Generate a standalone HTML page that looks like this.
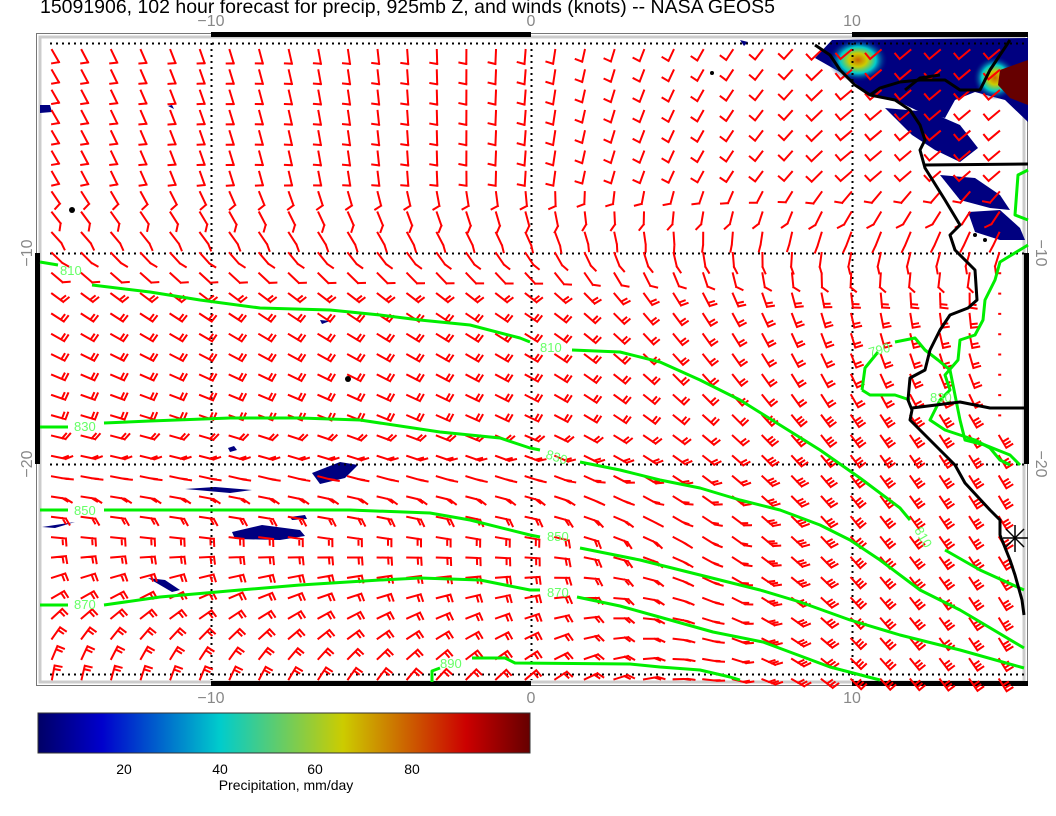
<!DOCTYPE html>
<html><head><meta charset="utf-8"><style>
html,body{margin:0;padding:0;background:#fff;width:1056px;height:816px;overflow:hidden}
svg{display:block}
text{font-family:"Liberation Sans",sans-serif}
</style></head><body>
<svg id="s" width="1056" height="816" viewBox="0 0 1056 816" xmlns="http://www.w3.org/2000/svg">
<defs>
<linearGradient id="cb" x1="0" x2="1" y1="0" y2="0">
<stop offset="0" stop-color="#000066"/>
<stop offset="0.13" stop-color="#0000cc"/>
<stop offset="0.37" stop-color="#00cccc"/>
<stop offset="0.62" stop-color="#cccc00"/>
<stop offset="0.87" stop-color="#cc0000"/>
<stop offset="1" stop-color="#660000"/>
</linearGradient>
<radialGradient id="hot" cx="0.5" cy="0.5" r="0.5">
<stop offset="0" stop-color="#cc6600"/>
<stop offset="0.3" stop-color="#cccc00"/>
<stop offset="0.6" stop-color="#00cccc"/>
<stop offset="1" stop-color="#000080" stop-opacity="0"/>
</radialGradient>
</defs>
<text x="40" y="13" font-size="19.5" fill="#000" textLength="735" lengthAdjust="spacingAndGlyphs">15091906, 102 hour forecast for precip, 925mb Z, and winds (knots) -- NASA GEOS5</text>
<!-- frame -->
<rect x="36.5" y="33.5" width="991" height="652" fill="none" stroke="#777" stroke-width="1"/>
<rect x="40" y="37" width="984" height="645" fill="none" stroke="#ccc" stroke-width="3"/>
<rect x="211" y="32" width="320" height="5" fill="#000"/>
<rect x="852" y="32" width="176" height="5" fill="#000"/>
<rect x="211" y="681" width="320" height="5" fill="#000"/>
<rect x="852" y="681" width="176" height="5" fill="#000"/>
<rect x="35" y="253" width="5" height="211" fill="#000"/>
<rect x="1024" y="253" width="5" height="211" fill="#000"/>
<!-- precip -->
<g fill="#000080">
<path d="M815,58 L832,40 L1028,38 L1028,122 L1005,100 L975,92 L955,100 L945,118 L920,112 L895,100 L870,95 L845,75 Z"/>
<path d="M885,108 L930,112 L960,125 L978,148 L960,162 L935,150 L912,135 Z"/>
<path d="M940,175 L975,178 L1000,195 L1010,210 L990,208 L960,200 Z"/>
<path d="M968,212 L1000,210 L1020,228 L1025,240 L1000,240 L975,232 Z"/>
<path d="M740,40 L748,42 L744,46 Z"/>
<path d="M312,473 L340,462 L358,465 L345,478 L320,484 Z"/>
<path d="M185,489 L215,487 L252,490 L230,493 Z"/>
<path d="M232,532 L262,525 L300,530 L305,536 L280,540 L235,539 Z"/>
<path d="M42,527 L75,522 L55,528 Z"/>
<path d="M148,578 L165,580 L180,590 L172,592 Z"/>
<path d="M228,448 L234,446 L237,450 L230,452 Z"/>
<path d="M290,517 L305,515 L307,519 L292,520 Z"/>
<path d="M40,105 L50,105 L52,112 L40,113 Z"/>
<path d="M168,106 L172,105 L174,109 Z"/>
<path d="M320,320 L330,321 L322,324 Z"/>
</g>
<ellipse cx="858" cy="60" rx="30" ry="22" fill="url(#hot)"/>
<ellipse cx="995" cy="78" rx="22" ry="22" fill="url(#hot)"/>
<path d="M1000,70 L1028,60 L1028,105 L1010,98 L998,85 Z" fill="#660000"/>
<!-- grid -->
<g stroke="#000" stroke-width="2" stroke-dasharray="2,4" fill="none">
<line x1="50" y1="43.5" x2="1024" y2="43.5"/>
<line x1="50" y1="253.5" x2="1024" y2="253.5"/>
<line x1="50" y1="464.5" x2="1024" y2="464.5"/>
<line x1="50" y1="674.5" x2="1024" y2="674.5"/>
<line x1="211.5" y1="43" x2="211.5" y2="680"/>
<line x1="531.5" y1="43" x2="531.5" y2="680"/>
<line x1="852.5" y1="43" x2="852.5" y2="680"/>
</g>
<g id="barbs" stroke="#ff0000" stroke-width="2" fill="none" stroke-linecap="square"></g>
<!-- contours -->
<g stroke="#00ee00" stroke-width="3" fill="none" stroke-linejoin="round">
<polyline points="40,262 58,265"/>
<polyline points="92,285 150,292 200,300 260,308 330,310 380,315 420,320 470,325 520,338 530,342"/>
<polyline points="572,350 620,352 660,362 700,380 740,400 780,425 820,450 860,478 900,508 910,520"/>
<polyline points="945,550 980,570 1024,590"/>
<polyline points="40,427 68,427"/>
<polyline points="104,423 150,421 230,418 300,418 360,420 440,432 500,438 530,448 540,450"/>
<polyline points="580,462 620,470 660,480 700,488 740,500 780,510 820,525 850,540 880,560 920,590 960,610 1024,648"/>
<polyline points="40,510 68,510"/>
<polyline points="104,510 200,510 350,510 430,513 470,520 530,535 540,537"/>
<polyline points="580,548 640,560 700,575 760,590 800,602 850,620 900,635 960,650 1024,668"/>
<polyline points="40,605 68,605"/>
<polyline points="104,605 160,597 240,590 300,585 380,580 420,578 480,580 530,590 540,590"/>
<polyline points="577,597 620,606 663,618 713,632 763,642 830,667 880,680"/>
<polyline points="432,682 432,671 440,668"/>
<polyline points="472,658 505,658 515,663 630,664 660,667 700,670 730,677 740,680"/>
<polyline points="862,390 865,368 878,352"/>
<polyline points="895,342 915,338 925,350 938,360 950,370 955,395 960,420 965,440 985,445 1010,455 1020,465"/>
<polyline points="862,390 870,395 895,395 910,400"/>
<polyline points="1028,170 1018,175 1015,215 1028,220"/>
<polyline points="1028,245 1000,262 995,280 985,300 983,320 975,335 960,340 958,360 945,375 950,390 940,400 930,420 945,430 975,440 990,448 1000,460 1010,465"/>
</g>
<g font-size="13" fill="#66ff66">
<text x="60" y="275">810</text>
<text x="540" y="352">810</text>
<text x="74" y="431">830</text>
<text x="545" y="458" transform="rotate(18 545 458)">830</text>
<text x="74" y="515">850</text>
<text x="547" y="541">850</text>
<text x="74" y="609">870</text>
<text x="547" y="597">870</text>
<text x="440" y="668">890</text>
<text x="870" y="357" transform="rotate(-15 870 357)">790</text>
<text x="914" y="530" transform="rotate(60 914 530)">810</text>
<text x="930" y="402">830</text>
</g>
<!-- coast -->
<g stroke="#000" stroke-width="3" fill="none" stroke-linejoin="round">
<polyline points="815,45 830,55 840,70 855,85 870,95 895,100 910,110 920,125 925,140 920,150 925,168 945,200 960,225 950,235 955,250 975,270 977,300 968,308 950,315 940,330 930,350 925,370 910,378 908,400 912,410 910,420 930,440 955,465 965,483 990,510 1000,520 1000,535 1010,560 1015,575 1022,600 1024,615"/>
<polyline points="925,165 1028,164"/>
<polyline points="912,408 960,402 990,408 1028,408"/>
<polyline points="870,95 880,88 900,82 920,80 945,80 960,90 980,90 990,70 1000,55 1010,40"/>
<polyline points="905,90 920,78 940,75"/>
</g>
<g fill="#000"><circle cx="72" cy="210" r="3"/><circle cx="348" cy="379" r="3"/><circle cx="712" cy="73" r="2"/><circle cx="975" cy="235" r="2"/><circle cx="985" cy="240" r="2"/></g>
<g stroke="#000" stroke-width="1.5"><line x1="1003" y1="538" x2="1028" y2="538"/><line x1="1015" y1="525" x2="1015" y2="552"/><line x1="1006" y1="529" x2="1024" y2="547"/><line x1="1024" y1="529" x2="1006" y2="547"/></g>
<!-- axis labels -->
<g font-size="16" fill="#888" text-anchor="middle">
<text x="211" y="26">−10</text><text x="531" y="26">0</text><text x="852" y="26">10</text>
<text x="211" y="703">−10</text><text x="531" y="703">0</text><text x="852" y="703">10</text>
<text transform="translate(32,253) rotate(-90)">−10</text>
<text transform="translate(32,464) rotate(-90)">−20</text>
<text transform="translate(1036,253) rotate(90)">−10</text>
<text transform="translate(1036,464) rotate(90)">−20</text>
</g>
<!-- colorbar -->
<rect x="38" y="713" width="492" height="40" fill="url(#cb)" stroke="#333" stroke-width="1"/>
<g font-size="14" fill="#000" text-anchor="middle">
<text x="124" y="774">20</text><text x="220" y="774">40</text><text x="315" y="774">60</text><text x="412" y="774">80</text>
<text x="286" y="790">Precipitation, mm/day</text>
</g>
</svg>
<script>
(function(){
var rows=[50,170,300,420,540,680],cols=[50,530,850,1020];
var A=[[60,95,140,140],[60,95,140,140],[35,35,80,90],[15,25,55,60],[5,10,50,60],[-80,-40,45,60]];
var R=[[110,100,90,90],[110,100,90,90],[-85,-85,-90,-90],[-85,-85,-90,-90],[85,85,-90,-90],[90,90,-90,-90]];
function idx(arr,v){for(var i=0;i<arr.length-2;i++){if(v<arr[i+1])return i;}return arr.length-2;}
function interp(M,x,y){var i=idx(rows,y),j=idx(cols,x);
var ty=Math.max(0,Math.min(1,(y-rows[i])/(rows[i+1]-rows[i])));
var tx=Math.max(0,Math.min(1,(x-cols[j])/(cols[j+1]-cols[j])));
var a=M[i][j]*(1-tx)+M[i][j+1]*tx,b=M[i+1][j]*(1-tx)+M[i+1][j+1]*tx;return a*(1-ty)+b*ty;}
var g=document.getElementById('barbs'),d='';
for(var y=50;y<=680;y+=20.3){for(var x=52;x<=1022;x+=29.6){
 if(x>975&&y>260&&y<420){d+='M'+x.toFixed(1)+','+y.toFixed(1)+'h1 ';continue;}
 var a=interp(A,x,y)*Math.PI/180,r=interp(R,x,y)*Math.PI/180;
 var L=(y<250&&x>560&&x<800)?12:14;
 var n=1+(y>280?1:0)+((x>740&&y>400)?1:0);
 var tx=x+L*Math.cos(a),ty=y+L*Math.sin(a);
 d+='M'+x.toFixed(1)+','+y.toFixed(1)+'L'+tx.toFixed(1)+','+ty.toFixed(1)+' ';
 for(var k=0;k<n;k++){var bx=tx-k*3.5*Math.cos(a),by=ty-k*3.5*Math.sin(a);var fl=k==0?7:6;
  d+='M'+bx.toFixed(1)+','+by.toFixed(1)+'l'+(fl*Math.cos(a+r)).toFixed(1)+','+(fl*Math.sin(a+r)).toFixed(1)+' ';}
}}
var p=document.createElementNS('http://www.w3.org/2000/svg','path');p.setAttribute('d',d);g.appendChild(p);
})();
</script>
</body></html>
